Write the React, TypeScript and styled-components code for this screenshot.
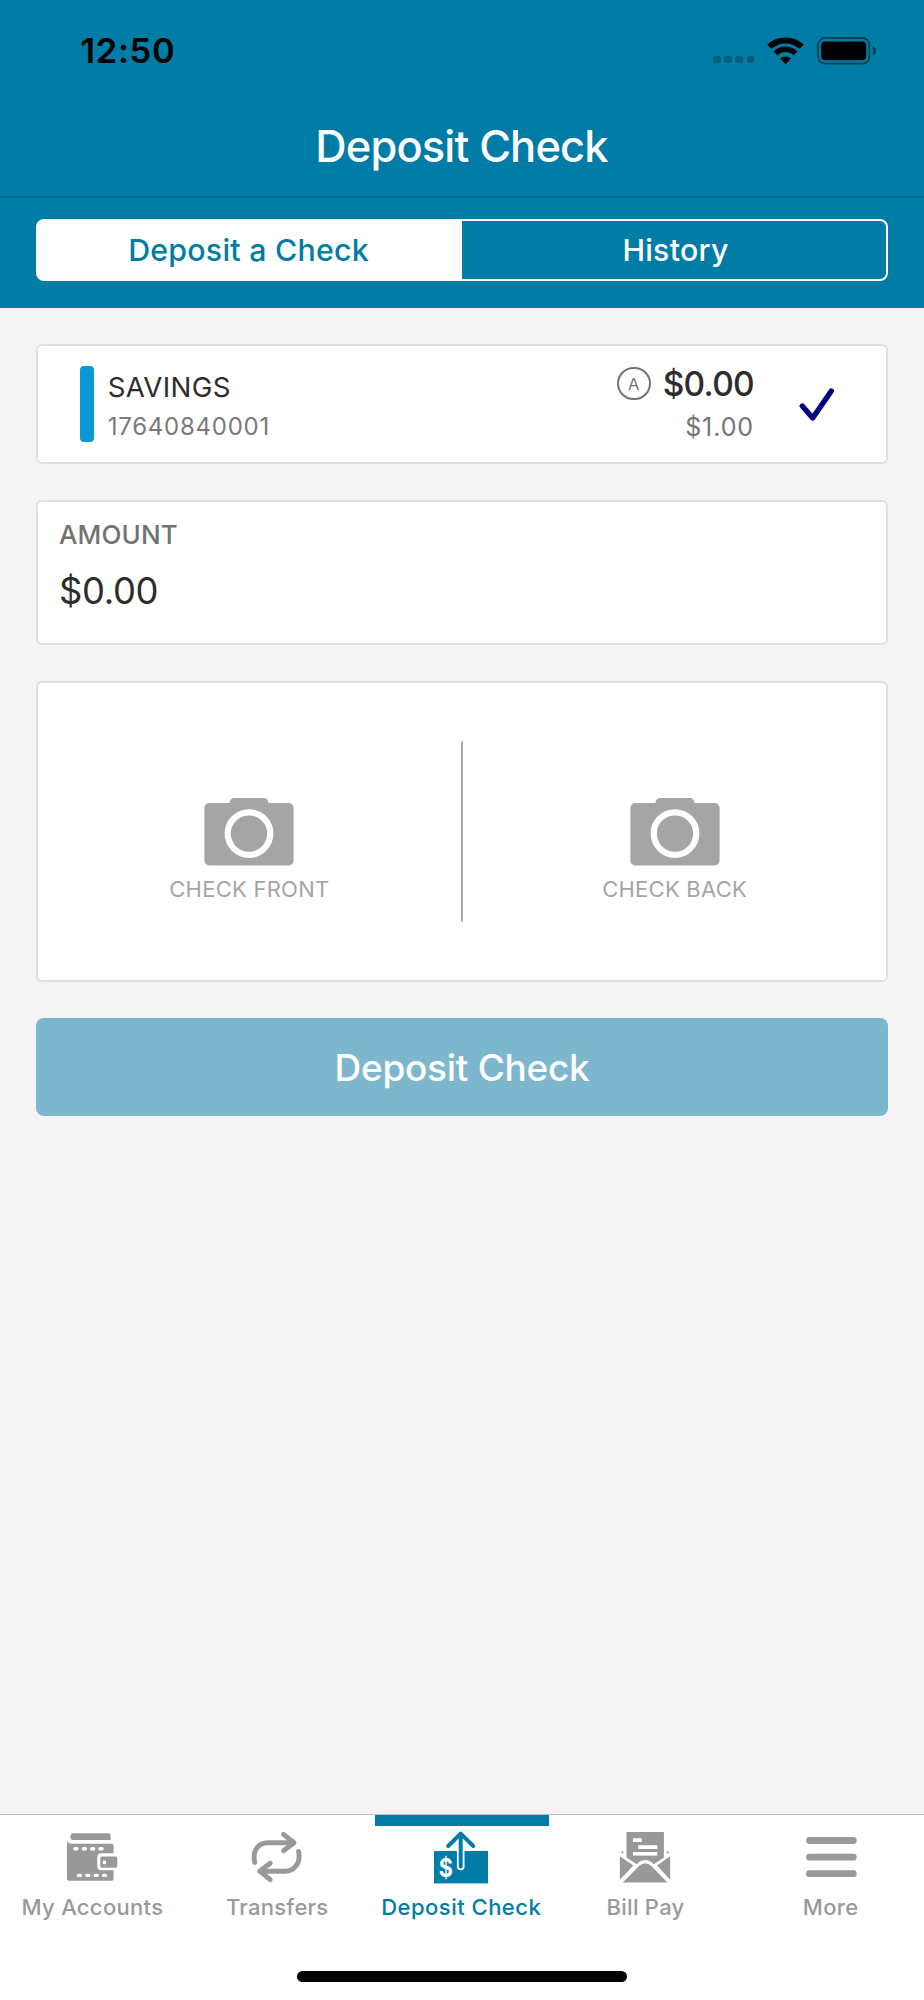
import React from 'react';
import styled, { createGlobalStyle } from 'styled-components';

const brand = '#007ca6';
const muted = '#999999';

const GlobalStyle = createGlobalStyle`
  * { box-sizing: border-box; }
  body {
    margin: 0;
    background: #f4f4f4;
    font-family: Inter, "Liberation Sans", sans-serif;
  }
  svg { display: block; flex: none; }
  button { font-family: inherit; border: 0; padding: 0; background: none; }
`;

const Screen = styled.div`
  display: flex;
  flex-direction: column;
  width: 924px;
  height: 2000px;
  background: #f4f4f4;
`;

/* ---------- header ---------- */

const Header = styled.header`
  height: 308px;
  background: ${brand};
`;

const StatusBar = styled.div`
  display: flex;
  align-items: center;
  justify-content: space-between;
  height: 102px;
  padding: 0 47px 0 80.5px;
`;

const Clock = styled.span`
  font-size: 34.5px;
  font-weight: 600;
  line-height: 40px;
  letter-spacing: 0.65px;
  color: #000;
`;

const StatusIcons = styled.div`
  display: flex;
  align-items: center;
  gap: 13px;
`;

const SignalDots = styled.div`
  display: flex;
  gap: 3.6px;
  margin-top: 17px;
`;

const SignalDot = styled.span`
  width: 7.5px;
  height: 7.5px;
  border-radius: 2px;
  background: rgba(0, 0, 0, 0.25);
`;

const TitleBar = styled.h1`
  height: 96px;
  margin: 0;
  padding: 0 1px 0 0;
  border-bottom: 2px solid #006e94;
  font-size: 43.4px;
  font-weight: 500;
  line-height: 88px;
  letter-spacing: -0.83px;
  text-align: center;
  color: #fff;
`;

const Segmented = styled.div`
  display: flex;
  height: 62px;
  margin: 21px 36px 0;
  border: 2px solid #fff;
  border-radius: 8px;
  background: linear-gradient(to right, #fff 50%, ${brand} 50%);
`;

const Segment = styled.button<{ $active?: boolean }>`
  flex: 1;
  padding: ${p => (p.$active ? '0 3px 0 0' : '0 0 0 3px')};
  font-size: 30.3px;
  font-weight: 500;
  line-height: 58px;
  letter-spacing: 0.25px;
  color: ${p => (p.$active ? brand : '#fff')};
`;

/* ---------- content ---------- */

const Content = styled.main`
  flex: 1;
  display: flex;
  flex-direction: column;
  padding: 36px 36px 0;
`;

const Card = styled.section<{ $height: number }>`
  height: ${p => p.$height}px;
  margin-bottom: 36px;
  border: 2px solid #dfdfdf;
  border-radius: 6px;
  background: #fff;
`;

const AccountCard = styled(Card)`
  display: flex;
  align-items: flex-start;
  padding: 0 51px 0 42px;
`;

const AccountStripe = styled.span`
  width: 14px;
  height: 76px;
  margin-top: 20px;
  border-radius: 4px;
  background: #0a99d4;
`;

const AccountInfo = styled.div`
  flex: 1;
  margin: 21.5px 0 0 13.7px;
`;

const AccountName = styled.div`
  font-size: 27.7px;
  line-height: 39.7px;
  letter-spacing: 0.35px;
  color: #2d2d2d;
`;

const AccountNumber = styled.div`
  font-size: 24px;
  line-height: 40.5px;
  letter-spacing: 0.75px;
  color: #7a7a7a;
`;

const Balances = styled.div`
  display: flex;
  flex-direction: column;
  align-items: flex-end;
  margin: 15.5px 45px 0 0;
`;

const AvailableRow = styled.div`
  display: flex;
  align-items: center;
  gap: 12px;
  height: 44px;
`;

const AvailableBadge = styled.span`
  width: 33.7px;
  height: 33.7px;
  border: 2px solid #737373;
  border-radius: 50%;
  font-size: 16.5px;
  font-weight: 400;
  line-height: 30.5px;
  text-align: center;
  color: #737373;
`;

const AvailableAmount = styled.span`
  font-size: 33.5px;
  font-weight: 500;
  line-height: 44px;
  letter-spacing: -0.7px;
  color: #2d2d2d;
`;

const CurrentAmount = styled.span`
  font-size: 25px;
  line-height: 43px;
  letter-spacing: 0.9px;
  color: #757575;
`;

const CheckMark = styled.svg`
  margin-top: 41px;
`;

const AmountCard = styled(Card)`
  padding: 12.7px 21px 0;
`;

const AmountLabel = styled.div`
  font-size: 26px;
  font-weight: 500;
  line-height: 40px;
  letter-spacing: 0.15px;
  color: #727272;
`;

const AmountValue = styled.div`
  margin-top: 12px;
  font-size: 36.4px;
  line-height: 48px;
  letter-spacing: -0.35px;
  color: #2d2d2d;
`;

const PhotoCard = styled(Card)`
  display: flex;
  align-items: flex-start;
`;

const PhotoSlot = styled.button`
  flex: 1;
  display: flex;
  flex-direction: column;
  align-items: center;
  padding-top: 115px;
`;

const PhotoLabel = styled.span`
  margin-top: 8px;
  font-size: 22px;
  font-weight: 400;
  line-height: 30px;
  letter-spacing: 0.25px;
  color: #a5a5a5;
`;

const Divider = styled.span`
  width: 2.5px;
  height: 181px;
  margin-top: 58px;
  border-radius: 1.5px;
  background: #a8a8a8;
`;

const SubmitButton = styled.button`
  height: 98px;
  padding-top: 1px;
  border-radius: 8px;
  background: #7db7cd;
  font-size: 37px;
  font-weight: 500;
  line-height: 97px;
  letter-spacing: -0.28px;
  color: #fff;
`;

/* ---------- tab bar ---------- */

const Footer = styled.footer`
  height: 186px;
  border-top: 1px solid #bfbfbf;
  background: #fff;
`;

const Tabs = styled.nav`
  display: flex;
  height: 156px;
`;

const Tab = styled.button<{ $active?: boolean }>`
  position: relative;
  flex: 1 0 0;
  display: flex;
  flex-direction: column;
  align-items: center;
  padding-top: 14px;
  color: ${p => (p.$active ? brand : muted)};

  &::before {
    content: '';
    display: ${p => (p.$active ? 'block' : 'none')};
    position: absolute;
    top: 0;
    left: calc(50% - 87px);
    width: 174px;
    height: 11px;
    background: ${brand};
  }
`;

const TabLabel = styled.span<{ $spacing: number; $nudge?: number }>`
  margin: 7px ${p => p.$nudge ?? 0}px 0 0;
  font-size: 22px;
  font-weight: 500;
  line-height: 30px;
  letter-spacing: ${p => p.$spacing}px;
  white-space: nowrap;
`;

const HomeIndicator = styled.div`
  width: 330px;
  height: 11px;
  margin: 0 auto;
  border-radius: 5.5px;
  background: #000;
`;

/* ---------- icons ---------- */

const WifiIcon = () => (
  <svg width="37" height="28" viewBox="0 0 37 28">
    <g fill="none" stroke="#000">
      <path d="M2.4 9.8A23.4 23.4 0 0 1 34.6 9.8" strokeWidth="6" />
      <path d="M8.5 16.4A14.2 14.2 0 0 1 28.5 16.4" strokeWidth="5.6" />
    </g>
    <path d="M18.5 27.2L13 21.6A8 8 0 0 1 24 21.6Z" />
  </svg>
);

const BatteryIcon = () => (
  <svg width="60" height="28" viewBox="0 0 60 28">
    <rect x="1" y="1" width="51.4" height="25.6" rx="7" fill="none" stroke="#000" strokeOpacity="0.5" strokeWidth="1.8" />
    <rect x="4.2" y="4.4" width="45" height="18.8" rx="4" />
    <path d="M55.8 9.2C60 11 60 16.8 55.8 18.6Z" fillOpacity="0.5" />
  </svg>
);

const CameraIcon = () => (
  <svg width="90" height="68" viewBox="0 0 90 68">
    <path
      d="M5 5H25.6C25.6 2 27.6 0 30.6 0H59.4C62.4 0 64.4 2 64.4 5H84.6A5 5 0 0 1 89.6 10V62.4A5 5 0 0 1 84.6 67.4H5.4A5 5 0 0 1 .4 62.4V10A5 5 0 0 1 5.4 5Z"
      fill="#a5a5a5"
    />
    <circle cx="45" cy="35.6" r="21.3" fill="none" stroke="#fff" strokeWidth="6.2" />
  </svg>
);

const TabIcon = ({ children }: { children: React.ReactNode }) => (
  <svg width="56" height="56" viewBox="0 0 56 56" fill="currentColor">
    {children}
  </svg>
);

const WalletIcon = () => (
  <TabIcon>
    <path d="M9.7 4.3H44.6Q46.6 4.3 46.6 6.3V11H9.7A3.3 3.3 0 0 1 9.7 4.3Z" />
    <path d="M2.9 12.3Q4.6 14.7 7.5 14.7H47.6Q49.6 14.7 49.6 16.7V24.3H37.3Q33.3 24.3 33.3 28.3V37.3Q33.3 41.3 37.3 41.3H49.6V49.7Q49.6 51.7 47.6 51.7H4.9Q2.9 51.7 2.9 49.7Z" />
    <rect x="36.3" y="27.6" width="17" height="11.1" rx="1.6" />
    <g fill="#fff">
      <rect x="38.8" y="31.6" width="3.2" height="3.6" rx="1" />
      {[11.9, 20.4, 28.7, 37].map(x => (
        <rect key={x} x={x - 2.6} y="18" width="5.2" height="3.4" rx="1.5" />
      ))}
      {[15.4, 23.8, 32.2, 40.5].map(x => (
        <rect key={x} x={x - 2.6} y="44.7" width="5.2" height="3.4" rx="1.5" />
      ))}
    </g>
  </TabIcon>
);

const TransfersIcon = () => (
  <TabIcon>
    <g fill="none" stroke="currentColor" strokeWidth="4.9" strokeLinecap="round" strokeLinejoin="round">
      <path d="M5.8 33.4C2.9 21.5 9.5 13.7 19.1 13.7H44" />
      <path d="M34.5 5.4L45 13.7L34.5 21.8" />
      <path d="M49.6 22.4C52 33.6 45.5 42.2 36 42.2H11" />
      <path d="M21.2 34.2L10.8 42.2L21.2 50.6" />
    </g>
  </TabIcon>
);

const DollarSign = styled.text`
  font-family: Inter, "Liberation Sans", sans-serif;
  font-size: 24px;
  font-weight: 700;
  text-anchor: middle;
`;

const DepositIcon = () => (
  <TabIcon>
    <rect x="0" y="22" width="54" height="32.4" />
    <path d="M26.7 22V37.4" stroke="#fff" strokeWidth="7.6" strokeLinecap="round" />
    <g fill="none" stroke="currentColor" strokeWidth="4" strokeLinecap="round">
      <path d="M26.7 5V37.4" />
      <path d="M14.2 17L26.7 4.6L39.2 17" strokeLinejoin="round" />
    </g>
    <DollarSign transform="translate(11.8 47.6) scale(0.9 1.06)" fill="#fff">$</DollarSign>
  </TabIcon>
);

const BillIcon = () => (
  <TabIcon>
    <path d="M7.5 3H44.9V28.6L34.8 35.2Q26.2 26.8 17.6 35.2L7.5 28.6Z" />
    <path d="M.9 27.2L14.4 36.6L.9 50.8Z" />
    <path d="M51.2 27.2L38 36.6L51.2 50.8Z" />
    <path d="M3.8 53.6L19.8 37.2Q26.2 31.4 32.6 37.2L48.4 53.6Z" />
    <circle cx="3.5" cy="23.3" r="1.1" />
    <circle cx="48.8" cy="23.3" r="1.1" />
    <g fill="#fff">
      <rect x="13.9" y="9.2" width="8.8" height="3.8" />
      <rect x="19.3" y="16.2" width="19" height="3.8" />
      <rect x="13.9" y="23" width="24.4" height="3.6" />
    </g>
  </TabIcon>
);

const MoreIcon = () => (
  <TabIcon>
    {[8, 24.7, 41.2].map(y => (
      <rect key={y} x="2.1" y={y} width="50.6" height="6.9" rx="3.4" />
    ))}
  </TabIcon>
);

const tabs = [
  { label: 'My Accounts', Icon: WalletIcon, spacing: 0.31 },
  { label: 'Transfers', Icon: TransfersIcon, spacing: 0.27 },
  { label: 'Deposit Check', Icon: DepositIcon, spacing: 0.48, nudge: 1.5, active: true },
  { label: 'Bill Pay', Icon: BillIcon, spacing: 0.27, nudge: 2.5 },
  { label: 'More', Icon: MoreIcon, spacing: 0.3, nudge: 2 },
];

export default function App() {
  return (
    <>
      <GlobalStyle />
      <Screen>
        <Header>
          <StatusBar>
            <Clock>12:50</Clock>
            <StatusIcons>
              <SignalDots>
                <SignalDot />
                <SignalDot />
                <SignalDot />
                <SignalDot />
              </SignalDots>
              <WifiIcon />
              <BatteryIcon />
            </StatusIcons>
          </StatusBar>
          <TitleBar>Deposit Check</TitleBar>
          <Segmented>
            <Segment $active>Deposit a Check</Segment>
            <Segment>History</Segment>
          </Segmented>
        </Header>

        <Content>
          <AccountCard $height={120}>
            <AccountStripe />
            <AccountInfo>
              <AccountName>SAVINGS</AccountName>
              <AccountNumber>17640840001</AccountNumber>
            </AccountInfo>
            <Balances>
              <AvailableRow>
                <AvailableBadge>A</AvailableBadge>
                <AvailableAmount>$0.00</AvailableAmount>
              </AvailableRow>
              <CurrentAmount>$1.00</CurrentAmount>
            </Balances>
            <CheckMark width="36" height="36" viewBox="0 0 36 36">
              <path
                d="M3.3 19L13.7 31L32.3 4"
                fill="none"
                stroke="#000080"
                strokeWidth="5.4"
                strokeLinecap="round"
                strokeLinejoin="round"
              />
            </CheckMark>
          </AccountCard>

          <AmountCard $height={145}>
            <AmountLabel>AMOUNT</AmountLabel>
            <AmountValue>$0.00</AmountValue>
          </AmountCard>

          <PhotoCard $height={301}>
            <PhotoSlot>
              <CameraIcon />
              <PhotoLabel>CHECK FRONT</PhotoLabel>
            </PhotoSlot>
            <Divider />
            <PhotoSlot>
              <CameraIcon />
              <PhotoLabel>CHECK BACK</PhotoLabel>
            </PhotoSlot>
          </PhotoCard>

          <SubmitButton>Deposit Check</SubmitButton>
        </Content>

        <Footer>
          <Tabs>
            {tabs.map(({ label, Icon, spacing, nudge, active }) => (
              <Tab key={label} $active={active}>
                <Icon />
                <TabLabel $spacing={spacing} $nudge={nudge}>{label}</TabLabel>
              </Tab>
            ))}
          </Tabs>
          <HomeIndicator />
        </Footer>
      </Screen>
    </>
  );
}
